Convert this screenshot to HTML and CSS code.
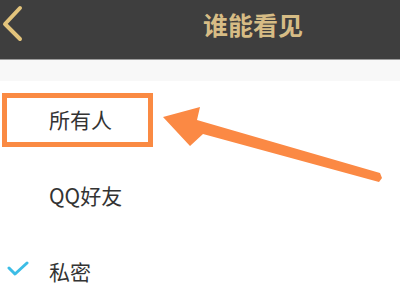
FILE: index.html
```html
<!DOCTYPE html>
<html lang="zh">
<head>
<meta charset="utf-8">
<link rel="stylesheet" href="styles.css">
</head>
<body>
<div class="page">
  <header class="bar">
    <svg class="back" width="26" height="40" viewBox="0 0 26 40">
      <polyline points="20,6 5,22 20,37" fill="none" stroke="#e3c47c" stroke-width="4" stroke-linecap="round" stroke-linejoin="round"/>
    </svg>
    <h1 class="title">谁能看见</h1>
  </header>
  <div class="strip"></div>
  <ul class="list">
    <li class="item">所有人</li>
    <li class="item">QQ好友</li>
    <li class="item checked">
      <svg class="check" width="22" height="16" viewBox="0 0 22 16">
        <polyline points="2,7 8,13 20,2" fill="none" stroke="#3cbde6" stroke-width="3" stroke-linecap="round" stroke-linejoin="round"/>
      </svg>
      私密
    </li>
  </ul>
  <div class="highlight"></div>
  <svg class="arrow" width="400" height="300" viewBox="0 0 400 300">
    <polygon points="163,117 200,107 197,120 380,173 382,178 379,182 203,134 190,146" fill="#fb8944"/>
  </svg>
</div>
</body>
</html>
```

FILE: styles.css
```css
html, body {
  margin: 0;
  padding: 0;
  background: #ffffff;
}
.page {
  position: relative;
  width: 400px;
  height: 300px;
  overflow: hidden;
  font-family: "Noto Sans CJK SC", "Noto Sans", sans-serif;
}
.bar {
  height: 60px;
  background: #3e3e3e;
  border-bottom: 1px solid #9c9c9c;
  display: flex;
  align-items: center;
  box-sizing: border-box;
}
.back {
  margin-left: 0;
  margin-top: -16px;
  flex: none;
}
.title {
  margin: -12px 0 0 177px;
  font-size: 25px;
  font-weight: 700;
  color: #d6bc85;
  letter-spacing: 0;
}
.strip {
  height: 21px;
  background: #f8f8f8;
}
.list {
  list-style: none;
  margin: 0;
  padding: 0;
}
.item {
  height: 76px;
  display: flex;
  align-items: center;
  padding-left: 49px;
  font-size: 21px;
  color: #333333;
  position: relative;
}
.check {
  position: absolute;
  left: 7px;
  top: 28px;
}
.highlight {
  position: absolute;
  left: 2px;
  top: 93px;
  width: 141px;
  height: 44px;
  border: 5px solid #fa8a43;
}
.arrow {
  position: absolute;
  left: 0;
  top: 0;
}
```
